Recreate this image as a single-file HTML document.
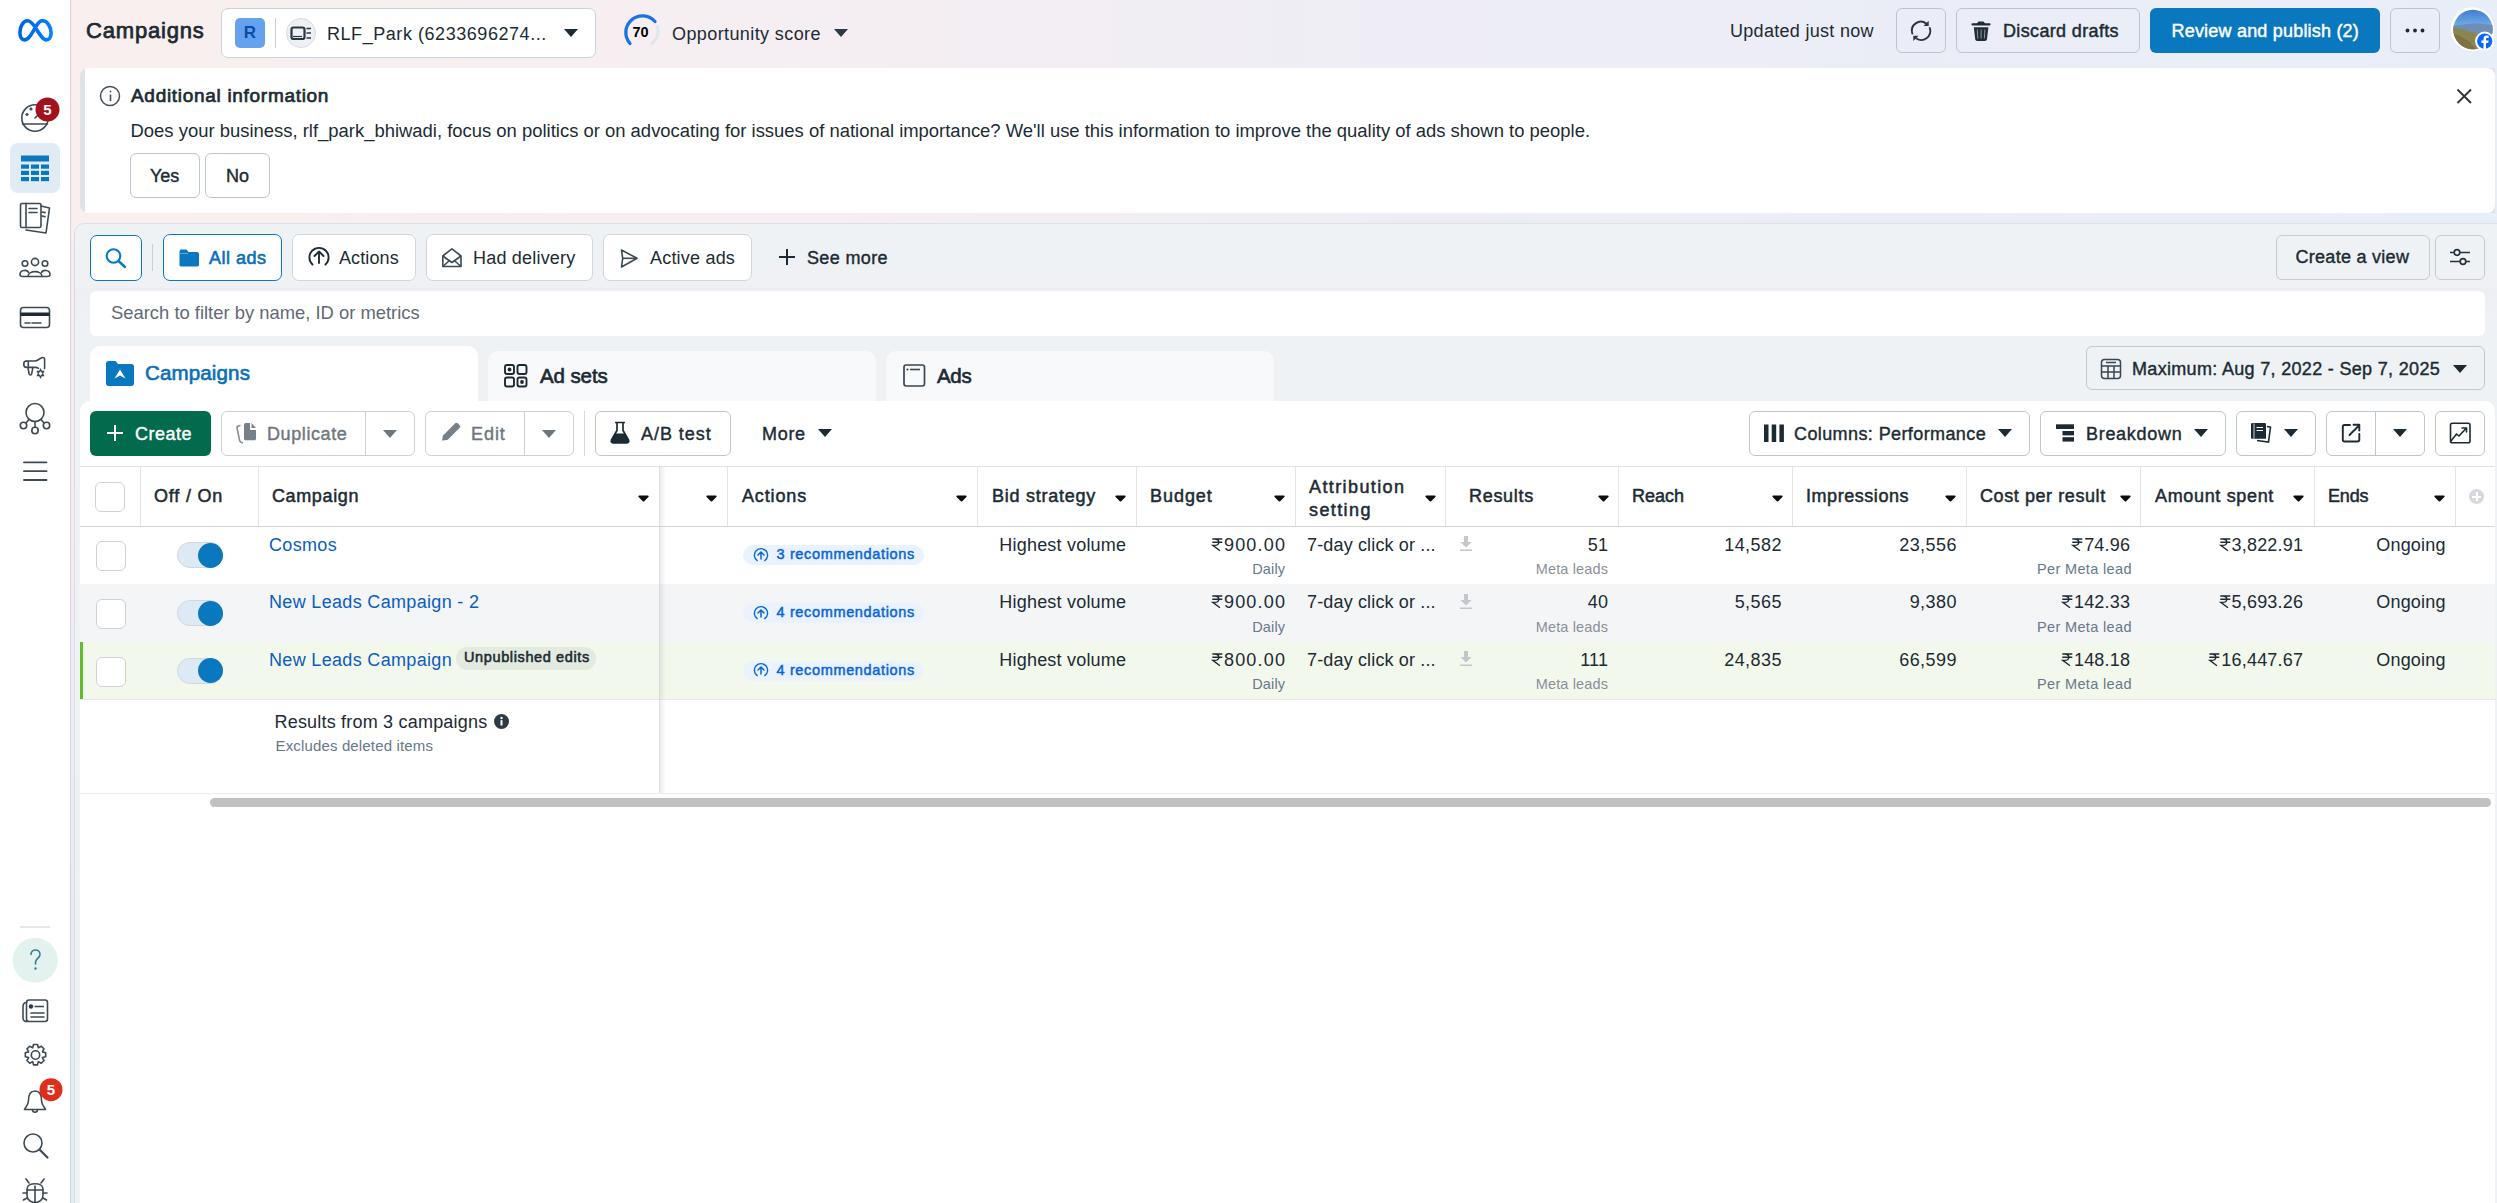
<!DOCTYPE html>
<html><head><meta charset="utf-8">
<style>
*{box-sizing:border-box;margin:0;padding:0}
html,body{width:2497px;height:1203px;overflow:hidden;background:#fff}
body{position:relative;font-family:"Liberation Sans",sans-serif;color:#1c2b33}
.a{position:absolute}
.t{position:absolute;white-space:nowrap;line-height:1}
.b{position:absolute;border:1px solid #c4ccd6;border-radius:6px;background:#fff}
.tri{position:absolute;width:0;height:0;border-left:6px solid transparent;border-right:6px solid transparent;border-top:7px solid #1c2b33}
svg{position:absolute;overflow:visible}
</style></head><body>

<!-- top gradient background -->
<div class="a" style="left:70px;top:0;width:2427px;height:400px;background:linear-gradient(90deg,#f9efee 0%,#f5eef2 30%,#eeedf5 55%,#e8eef8 100%)"></div>

<!-- sidebar -->
<div class="a" style="left:0;top:0;width:70px;height:1203px;background:#fff"></div>
<div class="a" style="left:70px;top:0;width:1px;height:1203px;background:linear-gradient(180deg,#dcd3d8 0%,#d8d3de 50%,#c9d5e2 100%)"></div>
<div class="a" style="left:71px;top:213px;width:3px;height:990px;background:linear-gradient(180deg,#f8efee 0%,#f2edf4 40%,#e2ebf6 100%)"></div>

<!-- filter panel bg -->
<div class="a" style="left:74px;top:223px;width:2423px;height:980px;background:linear-gradient(180deg,#eef2f5 0px,#eff1f5 60px,#eeeff5 68px,#eef2f5 115px,#eef2f5 980px);border-top:1px solid #dde2e8;border-left:1px solid #d9dde2;border-top-left-radius:10px"></div>

<!-- top bar -->
<div class="t" style="left:86px;top:20px;font-size:22px;letter-spacing:0.82px;-webkit-text-stroke:0.75px #1c2b33">Campaigns</div>

<div class="b" style="left:221px;top:8px;width:375px;height:50px;border-color:#c9d3dd;border-radius:7px"></div>
<div class="a" style="left:235px;top:18px;width:30px;height:30px;background:#64a2f0;border-radius:5px;color:#0b4ea2;font-weight:bold;font-size:17px;text-align:center;line-height:30px">R</div>
<div class="a" style="left:275px;top:18px;width:1px;height:30px;background:#c9ced6"></div>
<div class="a" style="left:286px;top:18px;width:30px;height:30px;background:#eef1f4;border-radius:50%;border:1px solid #d8dce2"></div>
<div class="t" style="left:327px;top:25px;font-size:18px;letter-spacing:0.55px">RLF_Park (6233696274...</div>
<div class="tri" style="left:564px;top:29px;border-left-width:7px;border-right-width:7px;border-top-width:8px"></div>

<div class="t" style="left:672px;top:25px;font-size:18px;letter-spacing:0.4px">Opportunity score</div>
<div class="tri" style="left:834px;top:29px;border-left-width:7px;border-right-width:7px;border-top-width:8px;border-top-color:#2b3a44"></div>

<div class="t" style="left:1730px;top:22px;font-size:18px;letter-spacing:0.3px">Updated just now</div>
<div class="b" style="left:1896px;top:8px;width:50px;height:45px;background:transparent;border-color:#bcc5cf"></div>
<div class="b" style="left:1956px;top:8px;width:184px;height:45px;background:transparent;border-color:#bcc5cf"></div>
<div class="t" style="left:2003px;top:22px;font-size:18px;letter-spacing:0.35px;-webkit-text-stroke:0.45px #1c2b33">Discard drafts</div>
<div class="a" style="left:2150px;top:8px;width:230px;height:45px;background:#0a78be;border-radius:6px"></div>
<div class="t" style="left:2171.5px;top:22px;font-size:18px;color:#fff;letter-spacing:0.2px;-webkit-text-stroke:0.45px #fff">Review and publish (2)</div>
<div class="b" style="left:2390px;top:8px;width:50px;height:45px;background:transparent;border-color:#bcc5cf"></div>

<!-- banner -->
<div class="a" style="left:80px;top:68px;width:2415px;height:145px;background:#dfe3e8;border-radius:8px 0 0 8px"></div>
<div class="a" style="left:85px;top:68px;width:2410px;height:145px;background:#fff;border-radius:0 8px 8px 0"></div>
<div class="t" style="left:131px;top:86px;font-size:19px;letter-spacing:0.7px;-webkit-text-stroke:0.7px #1c2b33">Additional information</div>
<div class="t" style="left:130.5px;top:121.5px;font-size:18.45px">Does your business, rlf_park_bhiwadi, focus on politics or on advocating for issues of national importance? We'll use this information to improve the quality of ads shown to people.</div>
<div class="b" style="left:130px;top:153px;width:70px;height:45px;border-color:#bcc5d0"></div>
<div class="t" style="left:150px;top:167px;font-size:18px;-webkit-text-stroke:0.4px #1c2b33">Yes</div>
<div class="b" style="left:205px;top:153px;width:65px;height:45px;border-color:#bcc5d0"></div>
<div class="t" style="left:226px;top:167px;font-size:18px;-webkit-text-stroke:0.4px #1c2b33">No</div>


<!-- filter row -->
<div class="b" style="left:90px;top:235px;width:52px;height:46px;border-color:#0a78be;border-radius:7px"></div>
<div class="a" style="left:152px;top:244px;width:1px;height:27px;background:#c8cfd7"></div>
<div class="b" style="left:163px;top:234px;width:119px;height:47px;border-color:#0a78be;border-width:1.5px;border-radius:7px"></div>
<div class="t" style="left:209px;top:249px;font-size:18px;color:#0a6fb8;letter-spacing:0.5px;-webkit-text-stroke:0.6px #0a6fb8">All ads</div>
<div class="b" style="left:292px;top:234px;width:124px;height:47px;border-color:#cfd6dd;border-radius:7px"></div>
<div class="t" style="left:339px;top:249px;font-size:18px;letter-spacing:0.1px">Actions</div>
<div class="b" style="left:426px;top:234px;width:167px;height:47px;border-color:#cfd6dd;border-radius:7px"></div>
<div class="t" style="left:473px;top:249px;font-size:18px;letter-spacing:0.2px">Had delivery</div>
<div class="b" style="left:603px;top:234px;width:149px;height:47px;border-color:#cfd6dd;border-radius:7px"></div>
<div class="t" style="left:650px;top:249px;font-size:18px;letter-spacing:0.2px">Active ads</div>
<div class="t" style="left:807px;top:249px;font-size:18px;letter-spacing:0.35px;-webkit-text-stroke:0.4px #1c2b33">See more</div>
<div class="a" style="left:779px;top:256px;width:16px;height:2px;background:#1c2b33"></div>
<div class="a" style="left:786px;top:249px;width:2px;height:16px;background:#1c2b33"></div>

<div class="b" style="left:2276px;top:235px;width:154px;height:45px;background:transparent;border-color:#c4ccd6"></div>
<div class="t" style="left:2295.5px;top:248px;font-size:18px;letter-spacing:0.28px;-webkit-text-stroke:0.4px #1c2b33">Create a view</div>
<div class="b" style="left:2435px;top:235px;width:50px;height:45px;background:transparent;border-color:#c4ccd6"></div>

<!-- search input -->
<div class="a" style="left:90px;top:291px;width:2395px;height:45px;background:#fff;border-radius:6px"></div>
<div class="t" style="left:111px;top:304px;font-size:18.4px;color:#5f6a74">Search to filter by name, ID or metrics</div>

<!-- tabs -->
<div class="a" style="left:488px;top:351px;width:388px;height:60px;background:#f8f9fb;border-radius:10px 10px 0 0"></div>
<div class="a" style="left:886px;top:351px;width:388px;height:60px;background:#f8f9fb;border-radius:10px 10px 0 0"></div>
<div class="a" style="left:90px;top:346px;width:388px;height:65px;background:#fff;border-radius:10px 10px 0 0"></div>
<div class="t" style="left:145px;top:363px;font-size:20.5px;color:#0a6fb8;letter-spacing:0.15px;-webkit-text-stroke:0.65px #0a6fb8">Campaigns</div>
<div class="t" style="left:540px;top:366px;font-size:20.5px;letter-spacing:-0.1px;-webkit-text-stroke:0.65px #1c2b33">Ad sets</div>
<div class="t" style="left:937px;top:366px;font-size:20.5px;letter-spacing:-0.3px;-webkit-text-stroke:0.65px #1c2b33">Ads</div>

<div class="b" style="left:2086px;top:346px;width:399px;height:44px;background:transparent;border-color:#bfc8d2"></div>
<div class="t" style="left:2132px;top:360px;font-size:18px;letter-spacing:0.32px;-webkit-text-stroke:0.4px #1c2b33">Maximum: Aug 7, 2022 - Sep 7, 2025</div>
<div class="tri" style="left:2453px;top:365px;border-left-width:7px;border-right-width:7px;border-top-width:8px"></div>

<!-- table panel -->
<div class="a" style="left:80px;top:401px;width:2415px;height:802px;background:#fff;border-radius:10px 10px 0 0"></div>
<div class="a" style="left:90px;top:401px;width:388px;height:12px;background:#fff"></div>

<!-- toolbar -->
<div class="a" style="left:90px;top:411px;width:121px;height:45px;background:#036b4d;border-radius:6px"></div>
<div class="a" style="left:107px;top:432px;width:16px;height:2px;background:#fff"></div>
<div class="a" style="left:114px;top:425px;width:2px;height:16px;background:#fff"></div>
<div class="t" style="left:135px;top:425px;font-size:18px;color:#fff;letter-spacing:0.5px;-webkit-text-stroke:0.4px #fff">Create</div>

<div class="b" style="left:221px;top:411px;width:194px;height:45px;border-color:#c9d0d8"></div>
<div class="a" style="left:365px;top:412px;width:1px;height:43px;background:#c9d0d8"></div>
<div class="t" style="left:267px;top:425px;font-size:18px;color:#6d767e;letter-spacing:0.6px;-webkit-text-stroke:0.4px #6d767e">Duplicate</div>
<div class="tri" style="left:383px;top:430px;border-top-color:#6d767e;border-left-width:7px;border-right-width:7px;border-top-width:8px"></div>

<div class="b" style="left:425px;top:411px;width:149px;height:45px;border-color:#c9d0d8"></div>
<div class="a" style="left:524px;top:412px;width:1px;height:43px;background:#c9d0d8"></div>
<div class="t" style="left:471px;top:425px;font-size:18px;color:#6d767e;letter-spacing:0.95px;-webkit-text-stroke:0.4px #6d767e">Edit</div>
<div class="tri" style="left:542px;top:430px;border-top-color:#6d767e;border-left-width:7px;border-right-width:7px;border-top-width:8px"></div>

<div class="a" style="left:584px;top:411px;width:1px;height:45px;background:#d3d8de"></div>
<div class="b" style="left:595px;top:411px;width:136px;height:45px;border-color:#bcc6d0"></div>
<div class="t" style="left:641px;top:425px;font-size:18px;letter-spacing:0.95px;-webkit-text-stroke:0.4px #1c2b33">A/B test</div>
<div class="t" style="left:762px;top:425px;font-size:18px;letter-spacing:0.7px;-webkit-text-stroke:0.4px #1c2b33">More</div>
<div class="tri" style="left:818px;top:429px;border-left-width:7px;border-right-width:7px;border-top-width:8px"></div>

<div class="b" style="left:1749px;top:411px;width:281px;height:45px;border-color:#bcc6d0"></div>
<div class="t" style="left:1794px;top:425px;font-size:18px;letter-spacing:0.4px;-webkit-text-stroke:0.4px #1c2b33">Columns: Performance</div>
<div class="tri" style="left:1998px;top:429px;border-left-width:7px;border-right-width:7px;border-top-width:8px"></div>
<div class="b" style="left:2040px;top:411px;width:186px;height:45px;border-color:#bcc6d0"></div>
<div class="t" style="left:2086px;top:425px;font-size:18px;letter-spacing:0.7px;-webkit-text-stroke:0.4px #1c2b33">Breakdown</div>
<div class="tri" style="left:2194px;top:429px;border-left-width:7px;border-right-width:7px;border-top-width:8px"></div>
<div class="b" style="left:2236px;top:411px;width:80px;height:45px;border-color:#bcc6d0"></div>
<div class="tri" style="left:2284px;top:429px;border-left-width:7px;border-right-width:7px;border-top-width:8px"></div>
<div class="b" style="left:2326px;top:411px;width:99px;height:45px;border-color:#bcc6d0"></div>
<div class="a" style="left:2375px;top:412px;width:1px;height:43px;background:#bcc6d0"></div>
<div class="tri" style="left:2393px;top:429px;border-left-width:7px;border-right-width:7px;border-top-width:8px"></div>
<div class="b" style="left:2435px;top:411px;width:50px;height:45px;border-color:#bcc6d0"></div>

<!-- TABLE -->
<div class="a" style="left:80px;top:466px;width:2415px;height:1px;background:#dfe2e6"></div>
<div class="a" style="left:80px;top:526px;width:2415px;height:1px;background:#d3d6da"></div>
<div class="a" style="left:140px;top:467px;width:1px;height:59px;background:#e3e5e8"></div>
<div class="a" style="left:258px;top:467px;width:1px;height:59px;background:#e3e5e8"></div>
<div class="a" style="left:727px;top:467px;width:1px;height:59px;background:#e3e5e8"></div>
<div class="a" style="left:977px;top:467px;width:1px;height:59px;background:#e3e5e8"></div>
<div class="a" style="left:1136px;top:467px;width:1px;height:59px;background:#e3e5e8"></div>
<div class="a" style="left:1295px;top:467px;width:1px;height:59px;background:#e3e5e8"></div>
<div class="a" style="left:1445px;top:467px;width:1px;height:59px;background:#e3e5e8"></div>
<div class="a" style="left:1618px;top:467px;width:1px;height:59px;background:#e3e5e8"></div>
<div class="a" style="left:1792px;top:467px;width:1px;height:59px;background:#e3e5e8"></div>
<div class="a" style="left:1966px;top:467px;width:1px;height:59px;background:#e3e5e8"></div>
<div class="a" style="left:2140px;top:467px;width:1px;height:59px;background:#e3e5e8"></div>
<div class="a" style="left:2314px;top:467px;width:1px;height:59px;background:#e3e5e8"></div>
<div class="a" style="left:2455px;top:467px;width:1px;height:59px;background:#e3e5e8"></div>
<div class="a" style="left:80px;top:584px;width:2415px;height:57.5px;background:#f4f5f7"></div>
<div class="a" style="left:80px;top:641.5px;width:2415px;height:57.5px;background:#f3f8ec"></div>
<div class="a" style="left:80px;top:641.5px;width:3px;height:57.5px;background:#63bb2a"></div>
<div class="a" style="left:80px;top:699px;width:2415px;height:1px;background:#e6e8eb"></div>
<div class="a" style="left:80px;top:793px;width:2415px;height:1px;background:#eceef0"></div>
<div class="a" style="left:659px;top:467px;width:1px;height:326px;background:#dcdee2"></div>
<div class="a" style="left:660px;top:467px;width:6px;height:326px;background:linear-gradient(90deg,rgba(0,0,0,0.07),rgba(0,0,0,0))"></div>
<div class="a" style="left:210px;top:798px;width:2281px;height:9px;background:#c1c1c1;border-radius:5px"></div>
<div class="t" style="left:154px;top:487.3px;font-size:18px;color:#1c2b33;letter-spacing:0.8px;-webkit-text-stroke:0.5px #1c2b33;">Off / On</div>
<div class="t" style="left:272px;top:487.3px;font-size:18px;color:#1c2b33;letter-spacing:0.62px;-webkit-text-stroke:0.5px #1c2b33;">Campaign</div>
<div class="t" style="left:742px;top:487.3px;font-size:18px;color:#1c2b33;letter-spacing:0.85px;-webkit-text-stroke:0.5px #1c2b33;">Actions</div>
<div class="t" style="left:992px;top:487.3px;font-size:18px;color:#1c2b33;letter-spacing:0.75px;-webkit-text-stroke:0.5px #1c2b33;">Bid strategy</div>
<div class="t" style="left:1150px;top:487.3px;font-size:18px;color:#1c2b33;letter-spacing:0.95px;-webkit-text-stroke:0.5px #1c2b33;">Budget</div>
<div class="t" style="left:1309px;top:477.8px;font-size:18px;color:#1c2b33;letter-spacing:1.4px;-webkit-text-stroke:0.5px #1c2b33;">Attribution</div>
<div class="t" style="left:1309px;top:500.8px;font-size:18px;color:#1c2b33;letter-spacing:1.4px;-webkit-text-stroke:0.5px #1c2b33;">setting</div>
<div class="t" style="left:1469px;top:487.3px;font-size:18px;color:#1c2b33;letter-spacing:0.7px;-webkit-text-stroke:0.5px #1c2b33;">Results</div>
<div class="t" style="left:1632px;top:487.3px;font-size:18px;color:#1c2b33;-webkit-text-stroke:0.5px #1c2b33;">Reach</div>
<div class="t" style="left:1806px;top:487.3px;font-size:18px;color:#1c2b33;letter-spacing:0.55px;-webkit-text-stroke:0.5px #1c2b33;">Impressions</div>
<div class="t" style="left:1980px;top:487.3px;font-size:18px;color:#1c2b33;letter-spacing:0.58px;-webkit-text-stroke:0.5px #1c2b33;">Cost per result</div>
<div class="t" style="left:2155px;top:487.3px;font-size:18px;color:#1c2b33;letter-spacing:0.66px;-webkit-text-stroke:0.5px #1c2b33;">Amount spent</div>
<div class="t" style="left:2328px;top:487.3px;font-size:18px;color:#1c2b33;letter-spacing:-0.15px;-webkit-text-stroke:0.5px #1c2b33;">Ends</div>
<svg width="11" height="7" viewBox="0 0 11 7" style="left:637.5px;top:494.5px"><path d="M1.2 0.6H9.8C10.6 0.6 10.9 1.4 10.4 2L6.2 6.2C5.8 6.6 5.2 6.6 4.8 6.2L0.6 2C0.1 1.4 0.4 0.6 1.2 0.6Z" fill="#0d0d0d"/></svg>
<svg width="11" height="7" viewBox="0 0 11 7" style="left:706px;top:494.5px"><path d="M1.2 0.6H9.8C10.6 0.6 10.9 1.4 10.4 2L6.2 6.2C5.8 6.6 5.2 6.6 4.8 6.2L0.6 2C0.1 1.4 0.4 0.6 1.2 0.6Z" fill="#0d0d0d"/></svg>
<svg width="11" height="7" viewBox="0 0 11 7" style="left:956px;top:494.5px"><path d="M1.2 0.6H9.8C10.6 0.6 10.9 1.4 10.4 2L6.2 6.2C5.8 6.6 5.2 6.6 4.8 6.2L0.6 2C0.1 1.4 0.4 0.6 1.2 0.6Z" fill="#0d0d0d"/></svg>
<svg width="11" height="7" viewBox="0 0 11 7" style="left:1115px;top:494.5px"><path d="M1.2 0.6H9.8C10.6 0.6 10.9 1.4 10.4 2L6.2 6.2C5.8 6.6 5.2 6.6 4.8 6.2L0.6 2C0.1 1.4 0.4 0.6 1.2 0.6Z" fill="#0d0d0d"/></svg>
<svg width="11" height="7" viewBox="0 0 11 7" style="left:1274px;top:494.5px"><path d="M1.2 0.6H9.8C10.6 0.6 10.9 1.4 10.4 2L6.2 6.2C5.8 6.6 5.2 6.6 4.8 6.2L0.6 2C0.1 1.4 0.4 0.6 1.2 0.6Z" fill="#0d0d0d"/></svg>
<svg width="11" height="7" viewBox="0 0 11 7" style="left:1425px;top:494.5px"><path d="M1.2 0.6H9.8C10.6 0.6 10.9 1.4 10.4 2L6.2 6.2C5.8 6.6 5.2 6.6 4.8 6.2L0.6 2C0.1 1.4 0.4 0.6 1.2 0.6Z" fill="#0d0d0d"/></svg>
<svg width="11" height="7" viewBox="0 0 11 7" style="left:1598px;top:494.5px"><path d="M1.2 0.6H9.8C10.6 0.6 10.9 1.4 10.4 2L6.2 6.2C5.8 6.6 5.2 6.6 4.8 6.2L0.6 2C0.1 1.4 0.4 0.6 1.2 0.6Z" fill="#0d0d0d"/></svg>
<svg width="11" height="7" viewBox="0 0 11 7" style="left:1771.5px;top:494.5px"><path d="M1.2 0.6H9.8C10.6 0.6 10.9 1.4 10.4 2L6.2 6.2C5.8 6.6 5.2 6.6 4.8 6.2L0.6 2C0.1 1.4 0.4 0.6 1.2 0.6Z" fill="#0d0d0d"/></svg>
<svg width="11" height="7" viewBox="0 0 11 7" style="left:1945px;top:494.5px"><path d="M1.2 0.6H9.8C10.6 0.6 10.9 1.4 10.4 2L6.2 6.2C5.8 6.6 5.2 6.6 4.8 6.2L0.6 2C0.1 1.4 0.4 0.6 1.2 0.6Z" fill="#0d0d0d"/></svg>
<svg width="11" height="7" viewBox="0 0 11 7" style="left:2119.5px;top:494.5px"><path d="M1.2 0.6H9.8C10.6 0.6 10.9 1.4 10.4 2L6.2 6.2C5.8 6.6 5.2 6.6 4.8 6.2L0.6 2C0.1 1.4 0.4 0.6 1.2 0.6Z" fill="#0d0d0d"/></svg>
<svg width="11" height="7" viewBox="0 0 11 7" style="left:2293px;top:494.5px"><path d="M1.2 0.6H9.8C10.6 0.6 10.9 1.4 10.4 2L6.2 6.2C5.8 6.6 5.2 6.6 4.8 6.2L0.6 2C0.1 1.4 0.4 0.6 1.2 0.6Z" fill="#0d0d0d"/></svg>
<svg width="11" height="7" viewBox="0 0 11 7" style="left:2434px;top:494.5px"><path d="M1.2 0.6H9.8C10.6 0.6 10.9 1.4 10.4 2L6.2 6.2C5.8 6.6 5.2 6.6 4.8 6.2L0.6 2C0.1 1.4 0.4 0.6 1.2 0.6Z" fill="#0d0d0d"/></svg>
<div class="a" style="left:2469px;top:489px;width:15px;height:15px;border-radius:50%;background:#d5d8dc"></div>
<div class="a" style="left:2472px;top:495.5px;width:9px;height:2px;background:#fff"></div>
<div class="a" style="left:2475.5px;top:492px;width:2px;height:9px;background:#fff"></div>
<div class="a" style="left:95px;top:482px;width:30px;height:30px;border:1px solid #cdd2d8;border-radius:6px;background:#fff"></div>
<div class="a" style="left:96px;top:541.3px;width:30px;height:30px;border:1px solid #cdd2d8;border-radius:6px;background:#fff"></div>
<div class="a" style="left:177px;top:542.3px;width:46px;height:26px;border-radius:13px;background:#dde9f5;border:1px solid #cdd8e3"></div>
<div class="a" style="left:198px;top:542.8px;width:25px;height:25px;border-radius:50%;background:#0a78be"></div>
<div class="t" style="left:269px;top:535.7px;font-size:18px;color:#0a5dc2;letter-spacing:0.33px;">Cosmos</div>
<div class="a" style="left:743px;top:545.3px;width:181px;height:20px;border-radius:10px;background:#eaf3fd"></div>
<svg width="16" height="16" viewBox="0 0 16 16" style="left:753px;top:546.8px"><path d="M4.2 13.6A6.6 6.6 0 1 1 11.8 13.6" fill="none" stroke="#0a66d8" stroke-width="1.4" stroke-linecap="round"/><path d="M8 12V5M5 8L8 5L11 8" fill="none" stroke="#0a66d8" stroke-width="1.5" stroke-linecap="round" stroke-linejoin="round"/></svg>
<div class="t" style="left:776.5px;top:547.3px;font-size:14.5px;color:#0a66d8;letter-spacing:0.65px;-webkit-text-stroke:0.5px #0a66d8;">3 recommendations</div>
<div class="t" style="right:1370.80px;top:535.7px;font-size:18px;color:#1c2b33;letter-spacing:0.2px;">Highest volume</div>
<div class="t" style="right:1210.80px;top:535.7px;font-size:18px;color:#1c2b33;letter-spacing:1.2px;"><svg class="ru" width="10.5" height="13" viewBox="0 0 10.5 13" style="position:relative;display:inline-block;vertical-align:0;margin-right:1.5px"><path d="M0.3 1H10.3M0.3 4.2H10.3M2.5 1C8.3 1 8.3 7.4 2.5 7.4H0.8L8 12.8" fill="none" stroke="currentColor" stroke-width="1.35"/></svg>900.00</div>
<div class="t" style="right:1211.85px;top:561.8px;font-size:14.5px;color:#67788a;letter-spacing:0.15px;">Daily</div>
<div class="t" style="left:1307px;top:535.7px;font-size:18px;color:#1c2b33;letter-spacing:0.15px;">7-day click or ...</div>
<svg width="14" height="16" viewBox="0 0 14 16" style="left:1459px;top:536.0px"><path d="M5 0H9V6H12.5L7 11.5L1.5 6H5Z M1 13.5H13V15H1Z" fill="#c2c7cd"/></svg>
<div class="t" style="right:888.80px;top:535.7px;font-size:18px;color:#1c2b33;letter-spacing:0.2px;">51</div>
<div class="t" style="right:888.85px;top:561.8px;font-size:14.5px;color:#8a9099;letter-spacing:0.15px;">Meta leads</div>
<div class="t" style="right:715.05px;top:535.7px;font-size:18px;color:#1c2b33;letter-spacing:0.45px;">14,582</div>
<div class="t" style="right:540.05px;top:535.7px;font-size:18px;color:#1c2b33;letter-spacing:0.45px;">23,556</div>
<div class="t" style="right:366.80px;top:535.7px;font-size:18px;color:#1c2b33;letter-spacing:0.2px;"><svg class="ru" width="10.5" height="13" viewBox="0 0 10.5 13" style="position:relative;display:inline-block;vertical-align:0;margin-right:1.5px"><path d="M0.3 1H10.3M0.3 4.2H10.3M2.5 1C8.3 1 8.3 7.4 2.5 7.4H0.8L8 12.8" fill="none" stroke="currentColor" stroke-width="1.35"/></svg>74.96</div>
<div class="t" style="right:365.15px;top:561.8px;font-size:14.5px;color:#67788a;letter-spacing:0.35px;">Per Meta lead</div>
<div class="t" style="right:193.80px;top:535.7px;font-size:18px;color:#1c2b33;letter-spacing:0.2px;"><svg class="ru" width="10.5" height="13" viewBox="0 0 10.5 13" style="position:relative;display:inline-block;vertical-align:0;margin-right:1.5px"><path d="M0.3 1H10.3M0.3 4.2H10.3M2.5 1C8.3 1 8.3 7.4 2.5 7.4H0.8L8 12.8" fill="none" stroke="currentColor" stroke-width="1.35"/></svg>3,822.91</div>
<div class="t" style="right:51.30px;top:535.7px;font-size:18px;color:#1c2b33;letter-spacing:0.2px;">Ongoing</div>
<div class="a" style="left:96px;top:599.0px;width:30px;height:30px;border:1px solid #cdd2d8;border-radius:6px;background:#fff"></div>
<div class="a" style="left:177px;top:600.0px;width:46px;height:26px;border-radius:13px;background:#dde9f5;border:1px solid #cdd8e3"></div>
<div class="a" style="left:198px;top:600.5px;width:25px;height:25px;border-radius:50%;background:#0a78be"></div>
<div class="t" style="left:269px;top:593.4px;font-size:18px;color:#0a5dc2;letter-spacing:0.33px;">New Leads Campaign - 2</div>
<div class="a" style="left:743px;top:603.0px;width:181px;height:20px;border-radius:10px;background:#eaf3fd"></div>
<svg width="16" height="16" viewBox="0 0 16 16" style="left:753px;top:604.5px"><path d="M4.2 13.6A6.6 6.6 0 1 1 11.8 13.6" fill="none" stroke="#0a66d8" stroke-width="1.4" stroke-linecap="round"/><path d="M8 12V5M5 8L8 5L11 8" fill="none" stroke="#0a66d8" stroke-width="1.5" stroke-linecap="round" stroke-linejoin="round"/></svg>
<div class="t" style="left:776.5px;top:605.0px;font-size:14.5px;color:#0a66d8;letter-spacing:0.65px;-webkit-text-stroke:0.5px #0a66d8;">4 recommendations</div>
<div class="t" style="right:1370.80px;top:593.4px;font-size:18px;color:#1c2b33;letter-spacing:0.2px;">Highest volume</div>
<div class="t" style="right:1210.80px;top:593.4px;font-size:18px;color:#1c2b33;letter-spacing:1.2px;"><svg class="ru" width="10.5" height="13" viewBox="0 0 10.5 13" style="position:relative;display:inline-block;vertical-align:0;margin-right:1.5px"><path d="M0.3 1H10.3M0.3 4.2H10.3M2.5 1C8.3 1 8.3 7.4 2.5 7.4H0.8L8 12.8" fill="none" stroke="currentColor" stroke-width="1.35"/></svg>900.00</div>
<div class="t" style="right:1211.85px;top:619.5px;font-size:14.5px;color:#67788a;letter-spacing:0.15px;">Daily</div>
<div class="t" style="left:1307px;top:593.4px;font-size:18px;color:#1c2b33;letter-spacing:0.15px;">7-day click or ...</div>
<svg width="14" height="16" viewBox="0 0 14 16" style="left:1459px;top:593.7px"><path d="M5 0H9V6H12.5L7 11.5L1.5 6H5Z M1 13.5H13V15H1Z" fill="#c2c7cd"/></svg>
<div class="t" style="right:888.80px;top:593.4px;font-size:18px;color:#1c2b33;letter-spacing:0.2px;">40</div>
<div class="t" style="right:888.85px;top:619.5px;font-size:14.5px;color:#8a9099;letter-spacing:0.15px;">Meta leads</div>
<div class="t" style="right:715.05px;top:593.4px;font-size:18px;color:#1c2b33;letter-spacing:0.45px;">5,565</div>
<div class="t" style="right:540.05px;top:593.4px;font-size:18px;color:#1c2b33;letter-spacing:0.45px;">9,380</div>
<div class="t" style="right:366.80px;top:593.4px;font-size:18px;color:#1c2b33;letter-spacing:0.2px;"><svg class="ru" width="10.5" height="13" viewBox="0 0 10.5 13" style="position:relative;display:inline-block;vertical-align:0;margin-right:1.5px"><path d="M0.3 1H10.3M0.3 4.2H10.3M2.5 1C8.3 1 8.3 7.4 2.5 7.4H0.8L8 12.8" fill="none" stroke="currentColor" stroke-width="1.35"/></svg>142.33</div>
<div class="t" style="right:365.15px;top:619.5px;font-size:14.5px;color:#67788a;letter-spacing:0.35px;">Per Meta lead</div>
<div class="t" style="right:193.80px;top:593.4px;font-size:18px;color:#1c2b33;letter-spacing:0.2px;"><svg class="ru" width="10.5" height="13" viewBox="0 0 10.5 13" style="position:relative;display:inline-block;vertical-align:0;margin-right:1.5px"><path d="M0.3 1H10.3M0.3 4.2H10.3M2.5 1C8.3 1 8.3 7.4 2.5 7.4H0.8L8 12.8" fill="none" stroke="currentColor" stroke-width="1.35"/></svg>5,693.26</div>
<div class="t" style="right:51.30px;top:593.4px;font-size:18px;color:#1c2b33;letter-spacing:0.2px;">Ongoing</div>
<div class="a" style="left:96px;top:656.5px;width:30px;height:30px;border:1px solid #cdd2d8;border-radius:6px;background:#fff"></div>
<div class="a" style="left:177px;top:657.5px;width:46px;height:26px;border-radius:13px;background:#dde9f5;border:1px solid #cdd8e3"></div>
<div class="a" style="left:198px;top:658.0px;width:25px;height:25px;border-radius:50%;background:#0a78be"></div>
<div class="t" style="left:269px;top:650.9px;font-size:18px;color:#0a5dc2;letter-spacing:0.33px;">New Leads Campaign</div>
<div class="a" style="left:456px;top:647.0px;width:140px;height:23px;border-radius:12px;background:#e3eadf"></div>
<div class="t" style="left:464px;top:650.2px;font-size:14.5px;color:#1c2b33;letter-spacing:0.62px;-webkit-text-stroke:0.55px #1c2b33;">Unpublished edits</div>
<div class="a" style="left:743px;top:660.5px;width:181px;height:20px;border-radius:10px;background:#eaf3fd"></div>
<svg width="16" height="16" viewBox="0 0 16 16" style="left:753px;top:662.0px"><path d="M4.2 13.6A6.6 6.6 0 1 1 11.8 13.6" fill="none" stroke="#0a66d8" stroke-width="1.4" stroke-linecap="round"/><path d="M8 12V5M5 8L8 5L11 8" fill="none" stroke="#0a66d8" stroke-width="1.5" stroke-linecap="round" stroke-linejoin="round"/></svg>
<div class="t" style="left:776.5px;top:662.5px;font-size:14.5px;color:#0a66d8;letter-spacing:0.65px;-webkit-text-stroke:0.5px #0a66d8;">4 recommendations</div>
<div class="t" style="right:1370.80px;top:650.9px;font-size:18px;color:#1c2b33;letter-spacing:0.2px;">Highest volume</div>
<div class="t" style="right:1210.80px;top:650.9px;font-size:18px;color:#1c2b33;letter-spacing:1.2px;"><svg class="ru" width="10.5" height="13" viewBox="0 0 10.5 13" style="position:relative;display:inline-block;vertical-align:0;margin-right:1.5px"><path d="M0.3 1H10.3M0.3 4.2H10.3M2.5 1C8.3 1 8.3 7.4 2.5 7.4H0.8L8 12.8" fill="none" stroke="currentColor" stroke-width="1.35"/></svg>800.00</div>
<div class="t" style="right:1211.85px;top:677.0px;font-size:14.5px;color:#67788a;letter-spacing:0.15px;">Daily</div>
<div class="t" style="left:1307px;top:650.9px;font-size:18px;color:#1c2b33;letter-spacing:0.15px;">7-day click or ...</div>
<svg width="14" height="16" viewBox="0 0 14 16" style="left:1459px;top:651.2px"><path d="M5 0H9V6H12.5L7 11.5L1.5 6H5Z M1 13.5H13V15H1Z" fill="#c2c7cd"/></svg>
<div class="t" style="right:888.80px;top:650.9px;font-size:18px;color:#1c2b33;letter-spacing:0.2px;">111</div>
<div class="t" style="right:888.85px;top:677.0px;font-size:14.5px;color:#8a9099;letter-spacing:0.15px;">Meta leads</div>
<div class="t" style="right:715.05px;top:650.9px;font-size:18px;color:#1c2b33;letter-spacing:0.45px;">24,835</div>
<div class="t" style="right:540.05px;top:650.9px;font-size:18px;color:#1c2b33;letter-spacing:0.45px;">66,599</div>
<div class="t" style="right:366.80px;top:650.9px;font-size:18px;color:#1c2b33;letter-spacing:0.2px;"><svg class="ru" width="10.5" height="13" viewBox="0 0 10.5 13" style="position:relative;display:inline-block;vertical-align:0;margin-right:1.5px"><path d="M0.3 1H10.3M0.3 4.2H10.3M2.5 1C8.3 1 8.3 7.4 2.5 7.4H0.8L8 12.8" fill="none" stroke="currentColor" stroke-width="1.35"/></svg>148.18</div>
<div class="t" style="right:365.15px;top:677.0px;font-size:14.5px;color:#67788a;letter-spacing:0.35px;">Per Meta lead</div>
<div class="t" style="right:193.80px;top:650.9px;font-size:18px;color:#1c2b33;letter-spacing:0.2px;"><svg class="ru" width="10.5" height="13" viewBox="0 0 10.5 13" style="position:relative;display:inline-block;vertical-align:0;margin-right:1.5px"><path d="M0.3 1H10.3M0.3 4.2H10.3M2.5 1C8.3 1 8.3 7.4 2.5 7.4H0.8L8 12.8" fill="none" stroke="currentColor" stroke-width="1.35"/></svg>16,447.67</div>
<div class="t" style="right:51.30px;top:650.9px;font-size:18px;color:#1c2b33;letter-spacing:0.2px;">Ongoing</div>
<div class="t" style="left:274.5px;top:712.8px;font-size:18px;color:#1c2b33;letter-spacing:0.2px;">Results from 3 campaigns</div>
<svg width="15" height="15" viewBox="0 0 15 15" style="left:494px;top:714px"><circle cx="7.5" cy="7.5" r="7.5" fill="#2c3a44"/><rect x="6.5" y="6.2" width="2" height="5.3" fill="#fff"/><circle cx="7.5" cy="4" r="1.2" fill="#fff"/></svg>
<div class="t" style="left:275.5px;top:738.3px;font-size:15px;color:#67788a;letter-spacing:0.15px;">Excludes deleted items</div>
<!-- /TABLE -->
<!-- ICONS -->
<svg class="a" width="2497" height="1203" viewBox="0 0 2497 1203" style="left:0;top:0;pointer-events:none">
<defs>
<linearGradient id="mg" x1="0" y1="0" x2="1" y2="0"><stop offset="0" stop-color="#0064e0"/><stop offset="1" stop-color="#0082fb"/></linearGradient>
<linearGradient id="sky" x1="0" y1="0" x2="0" y2="1"><stop offset="0" stop-color="#3d7bd0"/><stop offset="0.4" stop-color="#6fade6"/><stop offset="1" stop-color="#88b3de"/></linearGradient>
</defs>
<!-- meta logo -->
<path d="M35.3 27.5C33 24 30.5 20.8 27.6 20.8C22.5 20.8 19.9 28 19.9 32.5C19.9 37 22 39.9 24.7 39.9C28 39.9 31 35.5 35.3 27.5C39.5 20.5 41 20.8 42.8 20.8C47.5 20.8 51.1 27 51.1 33C51.1 37.5 49 39.9 46.3 39.9C43 39.9 39.8 34.5 35.3 27.5Z" fill="none" stroke="url(#mg)" stroke-width="3.6"/>

<!-- sidebar icons -->
<g fill="none" stroke="#3e4a53" stroke-width="1.6" stroke-linecap="round" stroke-linejoin="round">
 <!-- gauge -->
 <circle cx="35" cy="118" r="13.2"/>
 <path d="M22.5 124H47.5"/>
 <path d="M35 118L40 113"/>
 <path d="M27 113.5v2M26 114.5h2M31 108v2M30 109h2"/>
 <!-- reports -->
 <rect x="20.5" y="203.5" width="20.5" height="24" rx="1.5"/>
 <path d="M26 203.5V227.5M29 208.5H37M29 212.5H37"/>
 <path d="M41 206L49.5 208L46 233L26 230"/>
 <path d="M42 212l3 .6M42 216l3 .6"/>
 <!-- people -->
 <circle cx="35" cy="262" r="3.6"/>
 <circle cx="25" cy="263.5" r="2.8"/>
 <circle cx="45" cy="263.5" r="2.8"/>
 <path d="M28 276.5C28 270 42 270 42 276.5Z"/>
 <path d="M28.5 272.5C27.5 269.5 20 269.5 20 274.5C20 276 21 276.5 22.5 276.5H28"/>
 <path d="M41.5 272.5C42.5 269.5 50 269.5 50 274.5C50 276 49 276.5 47.5 276.5H42"/>
 <!-- card -->
 <rect x="20.5" y="307.5" width="29" height="20" rx="3"/>
 <path d="M25 323H30M32 323H41"/>
 <!-- megaphone -->
 <path d="M26.5 361H35C37.5 361 40 358 42.5 357.5C43.8 357.3 44.6 358 44.6 359.2V368.5"/>
 <path d="M26.5 361C22.8 361 22.8 367.4 26.5 367.4H35.5C36.8 367.4 37.6 367.8 38.5 368.4"/>
 <path d="M28.3 361.5V367"/>
 <path d="M28 367.6L29 373.5C29.3 375.5 31.5 375.5 31.8 373.5L32.8 367.6"/>
 <!-- network -->
 <circle cx="35" cy="412.5" r="9"/>
 <circle cx="23.5" cy="425.5" r="3.2"/>
 <circle cx="35" cy="430.5" r="3.2"/>
 <circle cx="46.5" cy="425.5" r="3.2"/>
 <path d="M35 421.5V427.3M29 419.5L26 423M41 419.5L44 423"/>
 <!-- hamburger -->
 <path d="M24 462.3H46.5M24 471.2H46.5M24 480H46.5" stroke-width="1.8"/>
 <!-- news -->
 <rect x="26.5" y="1000" width="21" height="21.5" rx="2.5"/>
 <path d="M26.5 1002.5C22.5 1002.5 23 1006 23 1010V1018C23 1021.5 25 1021.5 28 1021.5"/>
 <path d="M31 1013H44M31 1017H44"/>
 <!-- gear -->
 <circle cx="35.5" cy="1055" r="4.2"/>
 <path d="M33.5 1043H37.5L38.3 1046.3L41.3 1044.7L44 1047.4L42.4 1050.4L45.7 1051.2V1055.2L42.4 1056L44 1059L41.3 1061.7L38.3 1060.1L37.5 1063.4H33.5L32.7 1060.1L29.7 1061.7L27 1059L28.6 1056L25.3 1055.2V1051.2L28.6 1050.4L27 1047.4L29.7 1044.7L32.7 1046.3Z" transform="translate(0 1.5)"/>
 <!-- bell -->
 <path d="M35 1091C29.5 1091 28.5 1096 28.5 1100.5C28.5 1105 25 1108 24.5 1109.5H45.5C45 1108 41.5 1105 41.5 1100.5C41.5 1096 40.5 1091 35 1091Z"/>
 <path d="M32.5 1110C32.5 1113 37.5 1113 37.5 1110"/>
 <!-- search -->
 <circle cx="33" cy="1143" r="9"/>
 <path d="M39.5 1149.5L47.5 1157.5" stroke-width="2.2"/>
 <!-- bug -->
 <path d="M27 1189C27 1182 43 1182 43 1189V1195C43 1205 27 1205 27 1195Z"/>
 <path d="M35 1186V1203M27 1190H43M29 1183L26 1179M41 1183L44 1179M27 1193H23M43 1193H47M27 1198L23.5 1200M43 1198L46.5 1200"/>
</g>
<!-- active table icon -->
<rect x="10" y="143" width="50" height="50" rx="8" fill="#e1ebf6"/>
<g fill="#0a78be">
 <rect x="21" y="155.5" width="28" height="6"/>
 <rect x="21" y="164.5" width="8" height="4.2"/><rect x="31" y="164.5" width="8" height="4.2"/><rect x="41" y="164.5" width="8" height="4.2"/>
 <rect x="21" y="170.8" width="8" height="4.2"/><rect x="31" y="170.8" width="8" height="4.2"/><rect x="41" y="170.8" width="8" height="4.2"/>
 <rect x="21" y="177" width="8" height="4.2"/><rect x="31" y="177" width="8" height="4.2"/><rect x="41" y="177" width="8" height="4.2"/>
</g>
<!-- card stripe + megaphone star -->
<rect x="20.5" y="312.5" width="29" height="3.5" fill="#1f2c34"/>
<path d="M40.5 368L44.6 376.2H36.4Z M40.5 379L36.4 370.8H44.6Z" fill="#3e4a53"/>
<path d="M40.5 371.3L42.4 373.5L40.5 375.7L38.6 373.5Z" fill="#fff"/>
<circle cx="31" cy="1006.5" r="2.2" fill="#2a3640"/>
<path d="M34.5 1006.5H44" stroke="#3e4a53" stroke-width="1.6"/>
<!-- badges -->
<circle cx="47.5" cy="109.5" r="12" fill="#a3111c"/>
<text x="47.5" y="115" text-anchor="middle" font-family="Liberation Sans" font-weight="bold" font-size="15" fill="#fff">5</text>
<circle cx="51" cy="1089.7" r="11.5" fill="#dd2f1c"/>
<text x="51" y="1095" text-anchor="middle" font-family="Liberation Sans" font-weight="bold" font-size="15" fill="#fff">5</text>
<!-- divider + help -->
<path d="M20 927H50" stroke="#c8d1db" stroke-width="1"/>
<circle cx="35.2" cy="960.3" r="22.5" fill="#e3f2ef"/>
<path d="M31 954.5C31 948.5 40 948.5 40 954.5C40 958 35.5 958.5 35.5 962.5V964" fill="none" stroke="#33808a" stroke-width="1.6" stroke-linecap="round"/>
<circle cx="35.5" cy="968.5" r="1.2" fill="#33808a"/>

<!-- account circle icon -->
<rect x="291.5" y="27.5" width="13" height="11.5" rx="2" fill="none" stroke="#2b3740" stroke-width="2.2"/>
<path d="M293 36.5H302" stroke="#2b3740" stroke-width="1.2"/>
<path d="M306.5 28.5H311M306.5 33H311M306.5 38H311" stroke="#2b3740" stroke-width="1.6"/>
<!-- opportunity gauge -->
<path d="M630 43.5A15.5 15.5 0 1 1 655 21.5" fill="none" stroke="#1a73e8" stroke-width="3.3" stroke-linecap="round"/>
<path d="M657.5 27A15.5 15.5 0 0 1 652 43.5" fill="none" stroke="#dfe6ef" stroke-width="3.3" stroke-linecap="round"/>
<text x="640.5" y="36.5" text-anchor="middle" font-family="Liberation Sans" font-weight="bold" font-size="14.5" fill="#000">70</text>

<!-- refresh -->
<g fill="none" stroke="#2b3740" stroke-width="2" stroke-linecap="round">
 <path d="M1912.3 33.5A9 9 0 0 1 1926.3 23.6"/>
 <path d="M1929.8 28A9 9 0 0 1 1915.7 38"/>
</g>
<path d="M1928.7 20.8V26H1923.5Z M1913.3 41V35.8H1918.5Z" fill="#2b3740"/>
<!-- trash -->
<path d="M1972.5 24.3H1989.5" stroke="#1f2c34" stroke-width="2.2" stroke-linecap="round"/>
<path d="M1976.3 24.3L1978.5 21.4H1983.5L1985.7 24.3Z" fill="#1f2c34"/>
<path d="M1973.8 27.3H1988.4L1987 39C1986.9 40.3 1986 41 1984.8 41H1977.4C1976.2 41 1975.3 40.3 1975.2 39Z" fill="#1f2c34"/>
<path d="M1977.3 29.5L1977.8 38.5M1981.1 29.5V38.5M1984.9 29.5L1984.4 38.5" stroke="#8d959e" stroke-width="1"/>
<!-- dots -->
<circle cx="2407.5" cy="30.5" r="1.9" fill="#1c2b33"/><circle cx="2415" cy="30.5" r="1.9" fill="#1c2b33"/><circle cx="2422.5" cy="30.5" r="1.9" fill="#1c2b33"/>
<!-- avatar -->
<circle cx="2472.5" cy="29.2" r="22" fill="#fff"/>
<clipPath id="avc"><circle cx="2473" cy="29.5" r="19.7"/></clipPath>
<g clip-path="url(#avc)">
 <rect x="2453" y="9" width="41" height="42" fill="url(#sky)"/>
 <path d="M2452 25.5L2462 24.8L2469 23.8L2476 23.2L2483 24L2494 25V34H2452Z" fill="#6f8db6"/>
 <path d="M2452 27.5L2460 28.5L2468 31L2476 33L2482 37L2488 42L2494 50V52H2452Z" fill="#8b8650"/>
 <path d="M2452 33L2460 36L2470 42L2478 52H2452Z" fill="#7d7442"/>
</g>
<circle cx="2484.7" cy="41.2" r="9.6" fill="#fff"/>
<circle cx="2484.7" cy="41.2" r="7.6" fill="#0866ff"/>
<path d="M2486 49V43H2488.2L2488.6 40.6H2486V39.1C2486 38.4 2486.3 37.9 2487.3 37.9H2488.7V35.7C2488.3 35.6 2487.5 35.5 2486.7 35.5C2484.8 35.5 2483.5 36.6 2483.5 38.7V40.6H2481.4V43H2483.5V49Z" fill="#fff"/>

<!-- banner info + close -->
<circle cx="110" cy="96" r="9.5" fill="none" stroke="#47535c" stroke-width="1.5"/>
<path d="M110.5 94.5V101" stroke="#47535c" stroke-width="1.6"/>
<circle cx="110.5" cy="91.5" r="0.9" fill="#47535c"/>
<path d="M2457.5 89.5L2471 103M2471 89.5L2457.5 103" stroke="#2b3740" stroke-width="1.9"/>

<!-- filter icons -->
<circle cx="113.5" cy="256" r="6.8" fill="none" stroke="#0a78be" stroke-width="2.1"/>
<path d="M118.5 261L125 267" stroke="#0a78be" stroke-width="2.4" stroke-linecap="round"/>
<path d="M179.5 251.5C179.5 250 180.5 249.5 181.5 249.5H186.5L188.5 252H197C198.5 252 199 253 199 254V264.5C199 266 198.5 266.5 197 266.5H181.5C180 266.5 179.5 266 179.5 264.5Z" fill="#0a78be"/>
<path d="M180 253.5H188" stroke="#5fa6d8" stroke-width="1"/>
<g fill="none" stroke="#1f2c34" stroke-width="1.9" stroke-linecap="round" stroke-linejoin="round">
 <path d="M312.5 264.5A9.6 9.6 0 1 1 325.5 264.5"/>
 <path d="M319 263V251.5M314.5 256L319 251.5L323.5 256"/>
</g>
<g fill="none" stroke="#3c4a54" stroke-width="1.6" stroke-linejoin="round">
 <path d="M442.8 256V266.5H461V256L451.9 248.8Z"/>
 <path d="M442.8 256L451.9 262.5L461 256M442.8 266.5L449.5 260.5M461 266.5L454.3 260.5"/>
 <path d="M621.5 250L637 258.3L621.5 267L622.7 258.3Z"/>
 <path d="M622.7 258.3H637"/>
</g>
<g fill="none" stroke="#26333c" stroke-width="1.7">
 <path d="M2450 252.5H2454M2460 252.5H2470M2450 261.5H2460M2466 261.5H2470"/>
 <circle cx="2457" cy="252.5" r="2.8"/>
 <circle cx="2463" cy="261.5" r="2.8"/>
</g>

<!-- tab icons -->
<path d="M106 363.5C106 362 107 361 108.5 361H115.5L118 364H131.5C133 364 134 365 134 366.5V383.5C134 385 133 386 131.5 386H108.5C107 386 106 385 106 383.5Z" fill="#0a78be"/>
<path d="M114.5 378.5L120 369.5L125.5 378.5L120 375.5Z" fill="#fff"/>
<g fill="none" stroke="#1c2b33" stroke-width="1.9">
 <rect x="505" y="365" width="9" height="9" rx="2"/><rect x="517.5" y="365" width="9" height="9" rx="2"/>
 <rect x="505" y="377.5" width="9" height="9" rx="2"/><rect x="517.5" y="377.5" width="9" height="9" rx="2"/>
 <rect x="904" y="365" width="20.5" height="21" rx="2.2" stroke="#3a4650" stroke-width="1.7"/>
 <path d="M910 369.5H920" stroke="#3a4650" stroke-width="1.6"/>
</g>
<circle cx="509.5" cy="369.5" r="1.9" fill="#1c2b33"/><circle cx="522" cy="382" r="1.9" fill="#1c2b33"/>
<circle cx="907.5" cy="369.5" r="1.1" fill="#3a4650"/>

<!-- date picker icon -->
<g fill="none" stroke="#3a4650" stroke-width="1.5">
 <rect x="2101.5" y="359.5" width="19" height="19" rx="3"/>
 <path d="M2101.5 366H2120.5M2101.5 372H2120.5M2108 366V378.5M2114 366V378.5M2106 362.5H2116"/>
</g>

<!-- toolbar icons -->
<path d="M244 425C244 423.5 245 423 246 423H250V428.5C250 429.5 250.5 430 251.5 430H256V438.5C256 439.5 255.5 440.3 254.3 440.3H246C244.8 440.3 244 439.5 244 438.5Z M251.5 423L256 428H251.5Z" fill="#777f88"/>
<path d="M240.5 425.5C238 425.5 237 426 237 428L239.5 440C239.8 442 240.5 442.8 243 442.8" fill="none" stroke="#868e96" stroke-width="1.6"/>
<path d="M442 440.5L443 435.5L455 423.5C456 422.5 457 422.5 458 423.5L459.5 425C460.5 426 460.5 427 459.5 428L447.5 440Z" fill="#777f88"/>
<path d="M615 422.5H625M617 423V430.5L611.5 440C610.8 441.5 611.5 442.8 613 442.8H627C628.5 442.8 629.2 441.5 628.5 440L623 430.5V423" fill="none" stroke="#1c2b33" stroke-width="1.7"/>
<path d="M614.5 433.5H625.5L628.5 440C629.2 441.5 628.5 442.8 627 442.8H613C611.5 442.8 610.8 441.5 611.5 440Z" fill="#1c2b33"/>
<rect x="1764" y="424.5" width="4.5" height="17.5" fill="#1c2b33"/><rect x="1771.7" y="424.5" width="4.5" height="17.5" fill="#1c2b33"/><rect x="1779.4" y="424.5" width="4.5" height="17.5" fill="#1c2b33"/>
<rect x="2056" y="424.3" width="18" height="4.7" fill="#1c2b33"/><rect x="2062.5" y="431" width="11.5" height="4.4" fill="#1c2b33"/><rect x="2062.5" y="437.2" width="11.5" height="4.4" fill="#1c2b33"/>
<path d="M2255 423H2264.5C2265.5 423 2266 423.5 2266 424.5V438.8H2252.5C2251.5 438.8 2251 438.3 2251 437.3V424.5C2251 423.5 2251.5 423 2252.5 423Z" fill="#1c2b33"/>
<path d="M2267 426.5L2270.5 427.2L2268.5 442L2257 440.5" fill="none" stroke="#1c2b33" stroke-width="1.6"/>
<path d="M2256.5 427.5H2263M2256.5 430.5H2263" stroke="#fff" stroke-width="1.2"/>
<path d="M2254 423.5V438.5" stroke="#fff" stroke-width="0.8"/>
<g fill="none" stroke="#1c2b33" stroke-width="1.9" stroke-linecap="round" stroke-linejoin="round">
 <path d="M2350 425H2344.5C2343.5 425 2342.8 425.7 2342.8 426.7V439.8C2342.8 440.8 2343.5 441.5 2344.5 441.5H2357.5C2358.5 441.5 2359.3 440.8 2359.3 439.8V434"/>
 <path d="M2349.5 435L2359 425.5M2353.5 424.8H2359.3V430.5"/>
 <rect x="2450.5" y="423.2" width="19.5" height="19.5" rx="1.8" stroke-width="1.6"/>
 <path d="M2451 441L2456.5 434L2459 436L2466 428.5M2462 428H2466.5V432" stroke-width="1.6"/>
</g>
</svg>
<!-- /ICONS -->
</body></html>
